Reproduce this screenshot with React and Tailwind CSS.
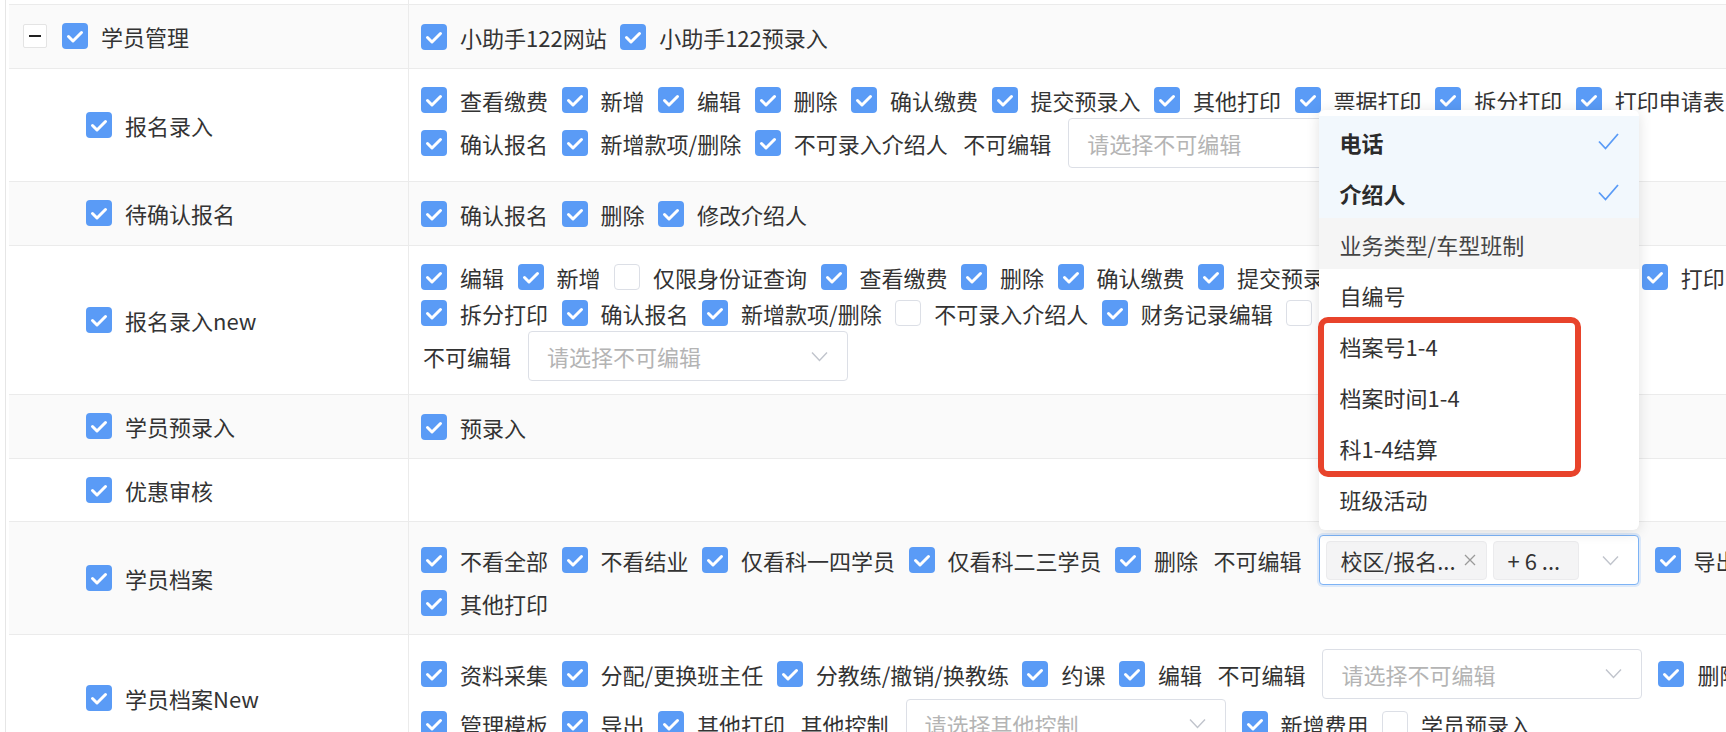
import { Fragment } from 'react'

const c = (t) => ({ kind: 'check', t, on: true })
const u = (t) => ({ kind: 'check', t, on: false })
const S = (label, ph) => ({ kind: 'select', label, ph })
const M = (label) => ({ kind: 'multi', label })

const rows = [
  { root: true, name: '学员管理', items: [c('小助手122网站'), c('小助手122预录入')] },
  {
    name: '报名录入',
    items: [
      c('查看缴费'), c('新增'), c('编辑'), c('删除'), c('确认缴费'), c('提交预录入'), c('其他打印'),
      c('票据打印'), c('拆分打印'), c('打印申请表'), c('确认报名'), c('新增款项/删除'), c('不可录入介绍人'),
      S('不可编辑', '请选择不可编辑'),
    ],
  },
  { name: '待确认报名', items: [c('确认报名'), c('删除'), c('修改介绍人')] },
  {
    name: '报名录入new',
    items: [
      c('编辑'), c('新增'), u('仅限身份证查询'), c('查看缴费'), c('删除'), c('确认缴费'), c('提交预录入'),
      c('其他打印'), c('票据打印'), c('打印申请表'), c('拆分打印'), c('确认报名'), c('新增款项/删除'),
      u('不可录入介绍人'), c('财务记录编辑'), u('学员预录入'), S('不可编辑', '请选择不可编辑'),
    ],
  },
  { name: '学员预录入', items: [c('预录入')] },
  { name: '优惠审核', items: [] },
  {
    name: '学员档案',
    items: [
      c('不看全部'), c('不看结业'), c('仅看科一四学员'), c('仅看科二三学员'), c('删除'),
      M('不可编辑'), c('导出'), c('其他打印'),
    ],
  },
  {
    name: '学员档案New',
    items: [
      c('资料采集'), c('分配/更换班主任'), c('分教练/撤销/换教练'), c('约课'), c('编辑'),
      S('不可编辑', '请选择不可编辑'), c('删除'), c('管理模板'), c('导出'), c('其他打印'),
      S('其他控制', '请选择其他控制'), c('新增费用'), u('学员预录入'),
    ],
  },
]

const options = [
  { t: '电话', sel: true },
  { t: '介绍人', sel: true },
  { t: '业务类型/车型班制', hover: true },
  { t: '自编号' },
  { t: '档案号1-4' },
  { t: '档案时间1-4' },
  { t: '科1-4结算' },
  { t: '班级活动' },
]

function Box({ on }) {
  if (!on) return <span className="h-[26px] w-[26px] shrink-0 rounded-[4px] border border-[#dcdfe6] bg-white" />
  return (
    <span className="flex h-[26px] w-[26px] shrink-0 items-center justify-center rounded-[4px] bg-[#5a9bf6]">
      <svg width="26" height="26" viewBox="0 0 26 26">
        <path d="M6.5 13.5L11 18L19.5 9.5" fill="none" stroke="#fff" strokeWidth="3" strokeLinecap="round" strokeLinejoin="round" />
      </svg>
    </span>
  )
}

function Chevron() {
  return (
    <svg width="17" height="11" viewBox="0 0 17 11" className="shrink-0">
      <path d="M1 1.5L8.5 9.5L16 1.5" fill="none" stroke="#c0c4cc" strokeWidth="1.4" />
    </svg>
  )
}

function Dropdown() {
  return (
    <div className="absolute bottom-[calc(100%+6px)] left-[-1px] z-20 w-[320px] rounded-[6px] bg-white py-[6px] shadow-[0_2px_14px_rgba(0,0,0,0.12)]">
      {options.map((o) => (
        <div
          key={o.t}
          className={`flex h-[51px] items-center justify-between pl-[21px] pr-[20px] ${
            o.sel ? 'bg-[#f2f8fd] font-bold text-[#2b2b2b]' : o.hover ? 'bg-[#f5f5f5] text-[#444]' : 'text-[#333]'
          }`}
        >
          <span>{o.t}</span>
          {o.sel && (
            <svg width="21" height="17" viewBox="0 0 21 17">
              <path d="M1 8.5L7.5 15.5L20 1" fill="none" stroke="#5a9bf6" strokeWidth="1.8" />
            </svg>
          )}
        </div>
      ))}
      <div className="absolute left-[-1px] top-[207px] h-[160px] w-[263px] rounded-[10px] border-[6px] border-[#e8432b]" />
    </div>
  )
}

function Item({ it }) {
  if (it.kind === 'check') {
    return (
      <div className="mr-[13.5px] flex h-[36px] items-center gap-[13px] whitespace-nowrap">
        <Box on={it.on} />
        <span>{it.t}</span>
      </div>
    )
  }
  if (it.kind === 'select') {
    return (
      <div className="flex items-center whitespace-nowrap">
        <span className="ml-[2px] mr-[17px]">{it.label}</span>
        <div className="mr-[16px] flex h-[50px] w-[320px] items-center justify-between rounded-[4px] border border-[#dcdfe6] bg-white pl-[18px] pr-[19px]">
          <span className="text-[#b4b4b4]">{it.ph}</span>
          <Chevron />
        </div>
      </div>
    )
  }
  return (
    <div className="flex items-center whitespace-nowrap">
      <span className="ml-[2px] mr-[17px]">{it.label}</span>
      <div className="relative mr-[16px] flex h-[50px] w-[320px] items-center rounded-[4px] border border-[#7db3f5] bg-white pl-[6px] pr-[19px] shadow-[0_0_0_2px_rgba(90,155,246,0.18)]">
        <Dropdown />
        <span className="flex h-[39px] w-[161px] items-center rounded-[4px] border border-[#ebebed] bg-[#f4f4f5] pl-[14px] pr-[10px]">
          <span>校区/报名...</span>
          <svg width="12" height="12" viewBox="0 0 12 12" className="ml-auto">
            <path d="M1 1L11 11M11 1L1 11" fill="none" stroke="#9a9a9a" strokeWidth="1.3" />
          </svg>
        </span>
        <span className="ml-[6px] flex h-[39px] w-[86px] items-center rounded-[4px] border border-[#ebebed] bg-[#f4f4f5] pl-[14px]">
          + 6 ...
        </span>
        <span className="ml-auto">
          <Chevron />
        </span>
      </div>
    </div>
  )
}

export default function App() {
  return (
    <div className="h-[732px] w-[1726px] overflow-hidden bg-white font-['Noto_Sans_CJK_SC',sans-serif] text-[22px] leading-none text-[#333]">
      <div className="ml-[5px] w-[1860px] border-l border-[#e6e6e6] pl-[3px]">
        <div className="flex h-[5px] border-b border-[#ebebeb]">
          <div className="w-[400px] shrink-0 border-r border-[#ebebeb]" />
        </div>
        {rows.map((r, i) => (
          <div key={r.name} className={`flex border-b border-[#ebebeb] ${i % 2 === 0 ? 'bg-[#fafafa]' : 'bg-white'}`}>
            <div className={`flex w-[400px] shrink-0 items-center border-r border-[#ebebeb] ${r.root ? 'pl-[14px]' : 'pl-[77px]'}`}>
              {r.root && (
                <span className="mr-[15px] flex h-[24px] w-[24px] items-center justify-center rounded-[2px] border border-[#e4e4e4] bg-white">
                  <span className="h-[2px] w-[12px] bg-[#222]" />
                </span>
              )}
              <div className="flex h-[36px] items-center gap-[13px]">
                <Box on />
                <span>{r.name}</span>
              </div>
            </div>
            <div className="flex min-h-[62px] w-[1440px] flex-wrap content-start items-center pb-[13px] pl-[12px] pr-[8px] pt-[13.5px]">
              {r.items.map((it, j) => (
                <Fragment key={j}>
                  <Item it={it} />
                </Fragment>
              ))}
            </div>
          </div>
        ))}
      </div>
    </div>
  )
}
